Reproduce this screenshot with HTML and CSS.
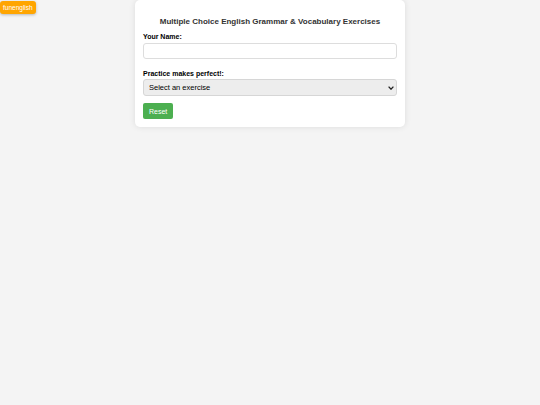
FILE: index.html
```html
<!DOCTYPE html>
<html lang="en">
<head>
<meta charset="utf-8">
<title>Multiple Choice English Grammar &amp; Vocabulary Exercises</title>
<link rel="stylesheet" href="styles.css">
</head>
<body>
<div class="badge">funenglish</div>
<div class="card">
  <h2 class="title">Multiple Choice English Grammar &amp; Vocabulary Exercises</h2>
  <label class="label" for="name">Your Name:</label>
  <input class="field" id="name" type="text">
  <label class="label label-gap" for="ex">Practice makes perfect!:</label>
  <div class="select-wrap">
    <select class="select" id="ex">
      <option>Select an exercise</option>
    </select>
    <svg class="arrow" width="6" height="4" viewBox="0 0 6 4"><path d="M0.6 0.6 L3 3.2 L5.4 0.6" fill="none" stroke="#222" stroke-width="1.3"/></svg>
  </div>
  <button class="btn" type="button">Reset</button>
</div>
</body>
</html>
```
FILE: styles.css
```css
html, body {
  margin: 0;
  padding: 0;
}
body {
  background: #f4f4f4;
  font-family: "Liberation Sans", Arial, sans-serif;
  color: #333;
  min-height: 405px;
}
.badge {
  position: absolute;
  top: 1px;
  left: 0;
  background: #ffa500;
  color: #fff;
  font-size: 6.5px;
  line-height: 13px;
  padding: 0 3px;
  border-radius: 3px;
  box-shadow: 0 1px 3px rgba(0,0,0,0.25);
}
.card {
  width: 254px;
  margin: 0 auto;
  padding: 8px;
  background: #fff;
  border-radius: 5px;
  box-shadow: 0 0 6px rgba(0,0,0,0.1);
}
.title {
  font-size: 8px;
  line-height: 11px;
  text-align: center;
  margin: 8px 0 5px;
  color: #333;
}
.label {
  display: block;
  font-size: 7px;
  font-weight: bold;
  line-height: 9px;
  color: #000;
  margin-bottom: 2px;
}
.label-gap {
  margin-top: 10px;
  margin-bottom: 1px;
}
.field {
  display: block;
  box-sizing: border-box;
  width: 100%;
  height: 16px;
  margin: 0;
  border: 1px solid #ddd;
  border-radius: 3px;
  background: #fff;
}
.select-wrap {
  position: relative;
}
.select {
  display: block;
  box-sizing: border-box;
  width: 100%;
  height: 17px;
  margin: 0;
  padding: 0 5px;
  border: 1px solid #d6d6d6;
  border-radius: 3px;
  background: #ededed;
  font-family: "Liberation Sans", Arial, sans-serif;
  font-size: 7.5px;
  color: #000;
  -webkit-appearance: none;
  appearance: none;
}
.arrow {
  position: absolute;
  right: 3px;
  top: 7px;
  pointer-events: none;
}
.btn {
  display: block;
  margin-top: 7px;
  height: 16px;
  padding: 0 6px;
  border: none;
  border-radius: 2px;
  background: #4caf50;
  color: #fff;
  font-family: "Liberation Sans", Arial, sans-serif;
  font-size: 7px;
}
```
